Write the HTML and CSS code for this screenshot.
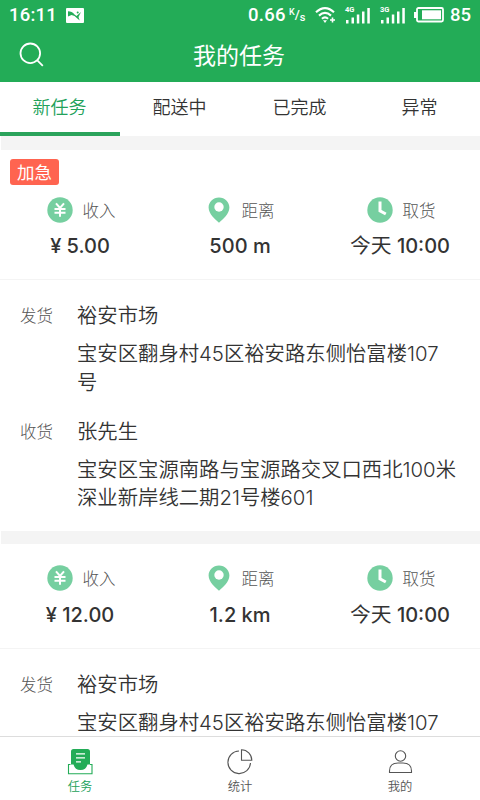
FILE: index.html
```html
<!DOCTYPE html>
<html lang="zh-CN">
<head>
<meta charset="utf-8">
<meta name="viewport" content="width=device-width, initial-scale=1">
<title>我的任务</title>
<link rel="stylesheet" href="styles.css">
</head>
<body>
<svg class="defs" width="0" height="0">
  <symbol id="yen" viewBox="0 0 26 26"><circle cx="13" cy="13" r="12.7" fill="#76cfa0"/><path d="M9 6.300l4 4.700 4-4.700M7.500 12h11M7.500 15.800h11M13 11v8.700" fill="none" stroke="#fff" stroke-width="2"/></symbol>
  <symbol id="pin" viewBox="0 0 22 26"><path d="M11 .4C5.100.4.6 4.900.6 10.600.6 17 7 22.400 11 25.800 15 22.400 21.400 17 21.400 10.600 21.400 4.900 16.900.4 11 .4z" fill="#76cfa0"/><circle cx="11" cy="10" r="4.700" fill="#fff"/></symbol>
  <symbol id="clock" viewBox="0 0 26 26"><circle cx="13" cy="13" r="12.700" fill="#76cfa0"/><path d="M13 4.500v9.300l5.800 3.200" fill="none" stroke="#fff" stroke-width="3"/></symbol>
</svg>
<header class="header">
  <div class="status">
    <span class="time">16:11</span>
    <svg class="photo" width="18" height="15" viewBox="0 0 18 15"><rect width="18" height="15" rx="1" fill="#fff"/><path d="M2 3.200Q6 3.200 8.500 6.500l2 1.500 4.500-4-2.500 5 1.200 3.500L8.500 8 5.500 7 2 8.500z" fill="#23ac57"/><circle cx="11.700" cy="4.500" r="1" fill="#23ac57"/></svg>
    <span class="speed">0.66</span>
    <span class="unit"><sup>K</sup>/<sub>s</sub></span>
    <svg class="wifi" width="22" height="18" viewBox="0 0 22 18" fill="none" stroke="#fff" stroke-width="2.100"><path d="M1 6.300Q10 -2 19 6.300M4 9.600Q10 4.200 16 9.600M6.900 12.700Q10 10.200 13.100 12.700"/><path d="M8 14.300h4L10 17z" fill="#fff" stroke="none"/><path d="M17.500 11.500v5M15 14h5" stroke-width="1.600"/></svg>
    <span class="signal"><span class="gen">4G</span><svg width="26" height="17" viewBox="0 0 26 17" fill="#fff"><path d="M1 13h2.500v3.500H1zM6.500 10.500H9v6H6.500zM11.800 7.500h2.500v9h-2.500zM17 4.500h2.500v12H17zM22.300 1h2.500v15.500h-2.500z"/></svg></span>
    <span class="signal second"><span class="gen">3G</span><svg width="26" height="17" viewBox="0 0 26 17" fill="#fff"><path d="M1 13h2.500v3.500H1zM6.500 10.500H9v6H6.500zM11.800 7.500h2.500v9h-2.500zM17 4.500h2.500v12H17zM22.300 1h2.500v15.500h-2.500z"/></svg></span>
    <svg class="battery" width="30" height="16" viewBox="0 0 30 16"><rect x="3" y="1" width="26" height="13.500" rx="1.500" fill="none" stroke="#fff" stroke-width="1.800"/><path d="M0 5h3v6H0z" fill="#fff"/><rect x="8" y="3.300" width="19" height="9" fill="#fff"/></svg>
    <span class="level">85</span>
  </div>
  <div class="bar">
    <svg class="search" width="26" height="26" viewBox="0 0 26 26" fill="none" stroke="#fff" stroke-width="1.800"><circle cx="11.300" cy="11.300" r="9.800"/><path d="M18.300 18.300l5.500 5.500"/></svg>
    <h1>我的任务</h1>
  </div>
</header>
<nav class="tabs"><a class="on">新任务</a><a>配送中</a><a>已完成</a><a>异常</a></nav>
<main class="list">
  <article class="card">
    <span class="badge">加急</span>
    <div class="stats">
      <div class="stat"><div class="label"><svg class="ic"><use href="#yen"/></svg>收入</div><div class="value">¥ 5.00</div></div>
      <div class="stat"><div class="label"><svg class="ic pin"><use href="#pin"/></svg>距离</div><div class="value">500 m</div></div>
      <div class="stat"><div class="label"><svg class="ic"><use href="#clock"/></svg>取货</div><div class="value"><span class="day">今天</span> 10:00</div></div>
    </div>
    <div class="places">
      <div class="place"><span class="kind">发货</span><div><div class="name">裕安市场</div><p>宝安区翻身村45区裕安路东侧怡富楼107<br>号</p></div></div>
      <div class="place"><span class="kind">收货</span><div><div class="name">张先生</div><p>宝安区宝源南路与宝源路交叉口西北100米<br>深业新岸线二期21号楼601</p></div></div>
    </div>
  </article>
  <article class="card">
    <div class="stats">
      <div class="stat"><div class="label"><svg class="ic"><use href="#yen"/></svg>收入</div><div class="value">¥ 12.00</div></div>
      <div class="stat"><div class="label"><svg class="ic pin"><use href="#pin"/></svg>距离</div><div class="value">1.2 km</div></div>
      <div class="stat"><div class="label"><svg class="ic"><use href="#clock"/></svg>取货</div><div class="value"><span class="day">今天</span> 10:00</div></div>
    </div>
    <div class="places">
      <div class="place"><span class="kind">发货</span><div><div class="name">裕安市场</div><p>宝安区翻身村45区裕安路东侧怡富楼107</p></div></div>
    </div>
  </article>
</main>
<footer class="dock">
  <a class="on"><svg width="26" height="26" viewBox="0 0 26 26"><path d="M3.500 15.500H1.500v9.200h23.500v-9.200h-2" fill="none" stroke="#23ac57" stroke-width="1.100"/><path d="M4 2.500Q4 0 6.500 0h14Q23 0 23 2.500v13h-2.500q-1.500 5.500-7 5.500t-7-5.500H4z" fill="#23ac57"/><path d="M9 4.800h9M9 8.800h9M9 12.800h5" stroke="#fff" stroke-width="1.200"/></svg>任务</a>
  <a><svg width="26" height="26" viewBox="0 0 26 26" fill="none" stroke="#555" stroke-width="1.100"><path d="M12 2A11.300 11.300 0 1 0 23.500 14"/><path d="M14.500.8v10.500h10.300A10.500 10.500 0 0 0 14.500.8z"/></svg>统计</a>
  <a><svg width="26" height="26" viewBox="0 0 26 26" fill="none" stroke="#555" stroke-width="1.100"><circle cx="13.500" cy="7" r="5.200"/><path d="M2.500 23.500V22q0-8 8.500-8h5q8.500 0 8.500 8v1.500z"/></svg>我的</a>
</footer>
</body>
</html>
```
FILE: styles.css
```css
* { box-sizing: border-box; margin: 0; padding: 0; }
body {
  width: 480px;
  height: 800px;
  overflow: hidden;
  display: flex;
  flex-direction: column;
  background: #fff;
  color: #333;
  font-family: Inter, "Noto Sans CJK SC", sans-serif;
  font-weight: 350;
}
svg { display: block; flex: none; }
.defs { display: none; }
.header { flex: none; height: 82px; background: #23ac57; color: #fff; }
.status {
  height: 30px;
  display: flex;
  align-items: center;
  padding: 0 9px;
  font: 500 18.500px/30px Roboto, sans-serif;
}
.time { width: 57px; letter-spacing: .2px; }
.speed { margin-left: 164px; width: 41px; letter-spacing: .3px; }
.unit { width: 17px; font-size: 13px; line-height: 16px; white-space: nowrap; }
.unit sup, .unit sub { font-size: 9px; line-height: 1; }
.unit sub { font-size: 11px; vertical-align: -2px; }
.unit sup { vertical-align: 4px; }
.wifi { margin-left: 9px; }
.signal { position: relative; margin-left: 8px; }
.second { margin-left: 9px; }
.gen { position: absolute; left: 0; top: -1px; font-size: 7.500px; font-weight: 700; line-height: 8px; }
.battery { margin-left: 8px; }
.level { margin-left: 6px; }
.bar { position: relative; height: 52px; }
.search { position: absolute; left: 19px; top: 12px; }
.bar h1 { font-size: 23px; font-weight: 400; line-height: 52px; text-align: center; padding-right: 2px; }
.tabs { flex: none; height: 54px; display: flex; }
.tabs a {
  flex: 1;
  height: 54px;
  line-height: 52px;
  text-align: center;
  padding-right: 1px;
  font-size: 18px;
  border-bottom: 4px solid transparent;
}
.tabs .on { color: #23a15a; border-color: #2ba35b; }
.list { flex: 1; min-height: 0; overflow: hidden; }
.card { margin-left: 1px; border-top: 13px solid #f4f4f4; }
.card:first-child { border-top-width: 14px; }
.badge {
  display: block;
  width: 49px;
  height: 26px;
  margin: 9px 0 -10px 9px;
  border-radius: 3px;
  background: #ff6450;
  color: #fff;
  font-size: 17.500px;
  font-weight: 400;
  line-height: 27px;
  text-align: center;
}
.stats {
  height: 105px;
  display: flex;
  margin-left: -1px;
  padding-top: 21.500px;
  border-bottom: 1px solid #f4f4f4;
}
.stat { flex: 1; text-align: center; }
.label {
  height: 26px;
  display: flex;
  align-items: center;
  justify-content: center;
  gap: 10px;
  padding-left: 2px;
  color: #555;
  font-size: 16.500px;
  font-weight: 300;
}
.ic { width: 26px; height: 26px; }
.pin { width: 22px; margin-right: 2px; }
.value { margin-top: 8.500px; font-size: 20px; font-weight: 500; line-height: 30px; white-space: nowrap; }
.day { font-size: 20.800px; font-weight: 400; }
.places { margin-left: -1px; padding: 21px 0 18px; }
.place { display: flex; }
.place + .place { margin-top: 19.500px; }
.kind { width: 77px; padding-left: 20px; color: #555; font-size: 16.500px; font-weight: 300; line-height: 30px; }
.name, .place p { font-size: 20.350px; line-height: 30px; white-space: nowrap; }
.place p { margin-top: 9px; line-height: 28.500px; }
.dock { flex: none; height: 64px; display: flex; background: #fff; border-top: 1px solid #ddd; }
.dock a {
  flex: 1;
  display: flex;
  flex-direction: column;
  align-items: center;
  padding-top: 12px;
  color: #555;
  font-size: 12.300px;
  line-height: 24px;
}
.dock .on { color: #23a15a; }
```
